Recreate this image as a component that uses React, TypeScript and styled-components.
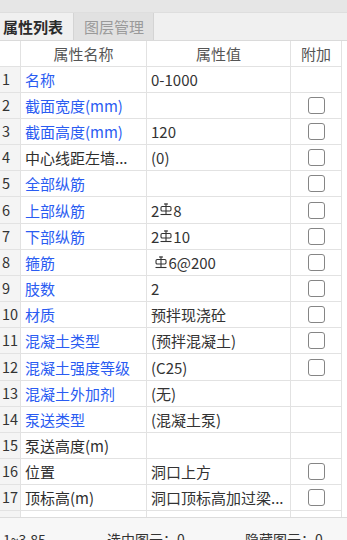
import React from "react";
import styled, { createGlobalStyle } from "styled-components";

const Global = createGlobalStyle`
  html, body { margin: 0; padding: 0; }
  body {
    width: 347px; height: 540px; overflow: hidden; background: #ffffff;
    font-family: "Noto Sans CJK SC", "Noto Sans", sans-serif;
  }
`;

const Page = styled.div`
  width: 347px;
  height: 540px;
  display: flex;
  flex-direction: column;
  overflow: hidden;
  background: #fff;
`;

const TopBar = styled.div`
  height: 13px;
  flex: none;
  background: #e6e6e6;
  border-bottom: 1px solid #dedede;
  box-sizing: border-box;
`;

const TabStrip = styled.div`
  height: 28px;
  flex: none;
  display: flex;
  align-items: stretch;
  background: #f0f0f0;
  border-bottom: 1px solid #dadada;
  box-sizing: border-box;
`;

const Tab = styled.div<{ $active?: boolean }>`
  display: flex;
  align-items: center;
  padding: 0 ${(p) => (p.$active ? "11px 0 3px" : "10px 0 10px")};
  font-size: 15px;
  font-weight: ${(p) => (p.$active ? 700 : 400)};
  color: ${(p) => (p.$active ? "#2b2b2b" : "#9a9a9a")};
  background: ${(p) => (p.$active ? "#f0f0f0" : "#e1e1e1")};
  border-left: ${(p) => (p.$active ? "none" : "1px solid #d4d4d4")};
  border-right: ${(p) => (p.$active ? "none" : "1px solid #d4d4d4")};
  width: ${(p) => (p.$active ? "73px" : "81px")};
  box-sizing: border-box;
  white-space: nowrap;
`;

const TableArea = styled.div`
  height: 476px;
  flex: none;
  overflow: hidden;
  background: #fff;
`;

const Row = styled.div<{ $h?: number }>`
  display: grid;
  grid-template-columns: 21px 126px 144px 51px;
  height: ${(p) => p.$h ?? 26}px;
`;

const Cell = styled.div<{ $align?: "left" | "center"; $num?: boolean; $header?: boolean }>`
  box-sizing: border-box;
  border-right: 1px solid #e2e2e2;
  border-bottom: 1px solid #e2e2e2;
  display: flex;
  align-items: center;
  justify-content: ${(p) => (p.$align === "center" ? "center" : "flex-start")};
  padding-left: ${(p) => (p.$num ? "2px" : p.$align === "center" ? "0" : "4px")};
  background: ${(p) => (p.$num && !p.$header ? "#f4f4f4" : "#fff")};
  font-size: ${(p) => (p.$num ? "14.5px" : "15px")};
  color: ${(p) => (p.$header ? "#555" : "#333")};
  white-space: nowrap;
  overflow: hidden;
  line-height: 1;
`;

const Name = styled.span<{ $blue?: boolean }>`
  color: ${(p) => (p.$blue ? "#2a5cf2" : "#2e2e2e")};
`;

const Value = styled.span`
  color: #333;
  display: inline-flex;
  align-items: center;
`;

const Check = styled.span`
  width: 17px;
  height: 17px;
  box-sizing: border-box;
  border: 1.5px solid #858585;
  border-radius: 3px;
  background: #fff;
  margin-left: 1px;
`;

const Footer = styled.div`
  flex: 1;
  background: #f7f7f7;
  border-top: 1px solid #dcdcdc;
  display: flex;
  align-items: flex-start;
  padding: 11px 0 0 3px;
  font-size: 14px;
  color: #333;
  white-space: nowrap;
`;

const FooterItem = styled.span<{ $w: number }>`
  width: ${(p) => p.$w}px;
  flex: none;
`;

const Rebar = () => (
  <svg width="12" height="13" viewBox="0 0 12 13" style={{ margin: "0 1px 1px 1px" }}>
    <g stroke="#333" strokeWidth="1.1" fill="none">
      <line x1="6" y1="0.5" x2="6" y2="12" />
      <line x1="4" y1="1" x2="8" y2="1" />
      <rect x="1" y="3.5" width="10" height="4.5" rx="1.2" />
      <line x1="0.5" y1="11.5" x2="11.5" y2="11.5" />
    </g>
  </svg>
);

type R = { n: number; name: string; blue: boolean; value: React.ReactNode; check: boolean };

const rows: R[] = [
  { n: 1, name: "名称", blue: true, value: "0-1000", check: false },
  { n: 2, name: "截面宽度(mm)", blue: true, value: "", check: true },
  { n: 3, name: "截面高度(mm)", blue: true, value: "120", check: true },
  { n: 4, name: "中心线距左墙...", blue: false, value: "(0)", check: true },
  { n: 5, name: "全部纵筋", blue: true, value: "", check: true },
  { n: 6, name: "上部纵筋", blue: true, value: <>2<Rebar />8</>, check: true },
  { n: 7, name: "下部纵筋", blue: true, value: <>2<Rebar />10</>, check: true },
  { n: 8, name: "箍筋", blue: true, value: <>&nbsp;<Rebar />6@200</>, check: true },
  { n: 9, name: "肢数", blue: true, value: "2", check: true },
  { n: 10, name: "材质", blue: true, value: "预拌现浇砼", check: true },
  { n: 11, name: "混凝土类型", blue: true, value: "(预拌混凝土)", check: true },
  { n: 12, name: "混凝土强度等级", blue: true, value: "(C25)", check: true },
  { n: 13, name: "混凝土外加剂", blue: true, value: "(无)", check: false },
  { n: 14, name: "泵送类型", blue: true, value: "(混凝土泵)", check: false },
  { n: 15, name: "泵送高度(m)", blue: false, value: "", check: false },
  { n: 16, name: "位置", blue: false, value: "洞口上方", check: true },
  { n: 17, name: "顶标高(m)", blue: false, value: "洞口顶标高加过梁...", check: true },
];

export default function App() {
  return (
    <Page>
      <Global />
      <TopBar />
      <TabStrip>
        <Tab $active>属性列表</Tab>
        <Tab>图层管理</Tab>
      </TabStrip>
      <TableArea>
        <Row $h={26}>
          <Cell $num $header />
          <Cell $header $align="center">属性名称</Cell>
          <Cell $header $align="center">属性值</Cell>
          <Cell $header $align="center">附加</Cell>
        </Row>
        {rows.map((r) => (
          <Row key={r.n} $h={r.n % 6 === 0 ? 27 : 26}>
            <Cell $num>{r.n}</Cell>
            <Cell>
              <Name $blue={r.blue}>{r.name}</Name>
            </Cell>
            <Cell>
              <Value>{r.value}</Value>
            </Cell>
            <Cell $align="center">{r.check ? <Check /> : null}</Cell>
          </Row>
        ))}
        <Row>
          <Cell $num />
          <Cell />
          <Cell />
          <Cell />
        </Row>
      </TableArea>
      <Footer>
        <FooterItem $w={104}>1~3.85</FooterItem>
        <FooterItem $w={138}>选中图元：0</FooterItem>
        <FooterItem $w={100}>隐藏图元：0</FooterItem>
      </Footer>
    </Page>
  );
}
